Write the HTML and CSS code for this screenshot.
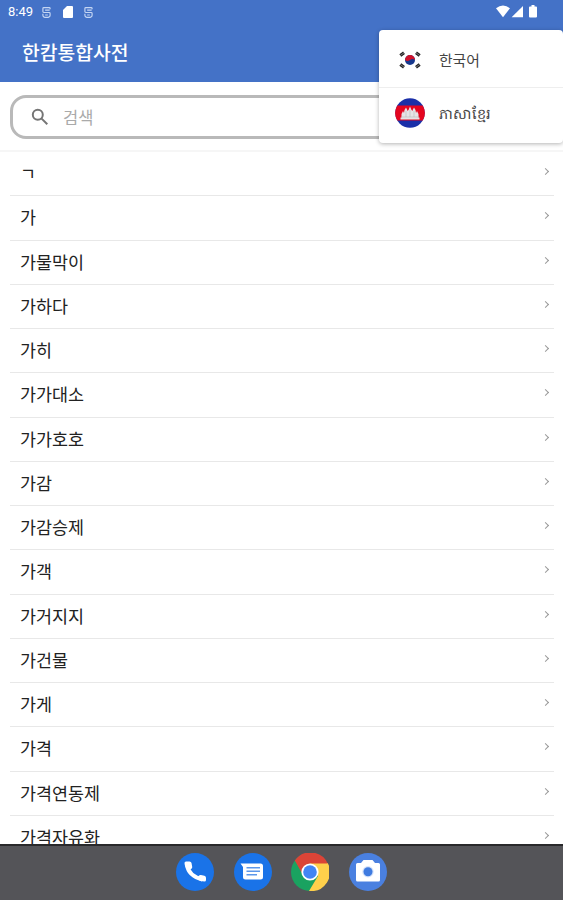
FILE: index.html
```
<!DOCTYPE html>
<html lang="ko">
<head>
    <meta charset="UTF-8">
    <title>한캄통합사전</title>
    <link rel="stylesheet" href="styles.css">
</head>
<body>

<header class="header">
    <div class="status-bar">
        <span class="time">8:49</span>
        <svg class="notice" viewBox="0 0 10 14"><path d="M9 3.500V2.500q0-1-1-1H2q-1 0-1 1V6q0 1 1 1h6q1 0 1 1v2q0 2.500-4 2.500T1 10V8.500M3.500 4.300h5M3.500 9.800h3"/></svg>
        <svg class="sd-card" viewBox="0 0 10 12"><path d="M4 0h5q1 0 1 1v10q0 1-1 1H1q-1 0-1-1V4z"/></svg>
        <svg class="notice" viewBox="0 0 10 14"><path d="M9 3.500V2.500q0-1-1-1H2q-1 0-1 1V6q0 1 1 1h6q1 0 1 1v2q0 2.500-4 2.500T1 10V8.500M3.500 4.300h5M3.500 9.800h3"/></svg>
        <svg class="signals" viewBox="0 0 42 14">
            <path d="M0 3.300q7-5.800 14 0L7 12.200z"/>
            <path d="M27 1v11.200H15.600z"/>
            <path d="M35.500 0h3v1.400H40q1 0 1 1v9q0 1-1 1h-6q-1 0-1-1v-9q0-1 1-1h1.500z"/>
        </svg>
    </div>
    <h1 class="title">한캄통합사전</h1>
</header>

<div class="search">
    <label class="search-box">
        <svg class="search-icon" viewBox="0 0 18 18"><circle cx="6.8" cy="6.8" r="5"/><path d="M10.6 10.6l5.700 5.700"/></svg>
        <input type="text" placeholder="검색">
    </label>
</div>

<ul class="words">
    <li>ㄱ<span class="arrow"></span></li>
    <li>가<span class="arrow"></span></li>
    <li>가물막이<span class="arrow"></span></li>
    <li>가하다<span class="arrow"></span></li>
    <li>가히<span class="arrow"></span></li>
    <li>가가대소<span class="arrow"></span></li>
    <li>가가호호<span class="arrow"></span></li>
    <li>가감<span class="arrow"></span></li>
    <li>가감승제<span class="arrow"></span></li>
    <li>가객<span class="arrow"></span></li>
    <li>가거지지<span class="arrow"></span></li>
    <li>가건물<span class="arrow"></span></li>
    <li>가게<span class="arrow"></span></li>
    <li>가격<span class="arrow"></span></li>
    <li>가격연동제<span class="arrow"></span></li>
    <li>가격자유화<span class="arrow"></span></li>
</ul>

<nav class="dock">
    <svg viewBox="0 0 38 38">
        <circle cx="19" cy="19" r="19" fill="#1a73e8"/>
        <path fill="none" stroke="#fff" stroke-width="4" d="M11 12q1.500 11 15.500 14.500"/>
        <path fill="#fff" d="M10 8.500h3.500q1.700 0 2 1.600l.7 3.600q.2 1.300-.8 2L12.500 18Q8.500 14 8.500 10q0-1.500 1.500-1.500zM20.500 25.500l2.300-2.700q.9-1 2.100-.7l3.500.7q1.600.3 1.600 2V27q0 1.600-1.600 1.600-4.400 0-7.900-3.100z"/>
    </svg>
    <svg viewBox="0 0 38 38">
        <circle cx="19" cy="19" r="19" fill="#1a73e8"/>
        <path fill="#fff" d="M6.500 10.500H26.500q2.500 0 2.500 2.500v11q0 2.500-2.500 2.500h-15q-2.500 0-2.500-2.500V14z"/>
        <path stroke="#5c97ea" stroke-width="1.600" d="M12.500 14.800h13.500M12.500 18.300h13.500M12.500 21.800h10.500"/>
    </svg>
    <svg viewBox="0 0 38 38">
        <circle cx="19" cy="19" r="19" fill="#1aa260"/>
        <path fill="#ffd04b" d="M19 10h17.700A19 19 0 0 1 18 38l9-15z"/>
        <path fill="#db4437" d="M3.800 7.600A19 19 0 0 1 36.700 10.500H19L10.800 20z"/>
        <circle cx="19" cy="19" r="8.600" fill="#fff"/>
        <circle cx="19" cy="19" r="6.800" fill="#4285f4"/>
    </svg>
    <svg viewBox="0 0 38 38">
        <circle cx="19" cy="19" r="19" fill="#4a80e0"/>
        <path fill="#fff" d="M14.500 7h9l2.500 3h3.500q1.500 0 1.500 1.500V27q0 1.500-1.500 1.500h-21Q7 28.500 7 27V11.500Q7 10 8.500 10H12z"/>
        <circle cx="19" cy="18.700" r="5.700" fill="#d5e3fb"/>
        <circle cx="19" cy="18.700" r="4.500" fill="#3f7be0"/>
    </svg>
</nav>

<div class="menu">
    <div class="menu-item">
        <svg class="flag" viewBox="0 0 30 30">
            <circle cx="15" cy="15" r="5" fill="#16388e"/>
            <path fill="#d0122b" d="M10 15a5 5 0 0 1 10 0q-2.500-2-5 0-2.500 2-5 0z"/>
            <path stroke="#222" stroke-width="3.200" d="M5.300 10.500l3.700-2.700M21 7.800l3.700 2.700M5.300 19.500L9 22.200M21 22.200l3.700-2.700"/>
            <path stroke="#fff" stroke-width=".4" d="M5.300 10.500l3.700-2.700M21 7.800l3.700 2.700M5.300 19.500L9 22.200M21 22.200l3.700-2.700"/>
        </svg>
        <span>한국어</span>
    </div>
    <div class="menu-item">
        <svg class="flag" viewBox="0 0 30 30">
            <circle cx="15" cy="15" r="14.700" fill="#1a2fa8"/>
            <path fill="#e4051f" d="M2.300 7.500h25.400a14.700 14.700 0 0 1 0 15H2.300a14.700 14.700 0 0 1 0-15z"/>
            <path fill="#e6e3e6" d="M5.500 21.500v-2h1V16L8 13l1 2 .5-3L11 9.500l1.300 2.500v1l1.200-1L15 8.500l1.500 3.500 1.200 1v-1L19 9.500l1.500 2.500.5 3 1-2 1.500 3v3.500h1v2z"/>
            <path stroke="#bbb" stroke-width=".6" d="M6 19h18M11 13v6M15 12v7M19 13v6"/>
        </svg>
        <span class="khmer" lang="km">ភាសាខ្មែរ</span>
    </div>
</div>

</body>
</html>
```
FILE: styles.css
```
* {
    box-sizing: border-box;
}
body {
    margin: 0;
    height: 100vh;
    display: flex;
    flex-direction: column;
    overflow: hidden;
    background: #fff;
    color: #222;
    font-family: "Noto Sans CJK KR", sans-serif;
}
.header {
    flex: none;
    height: 82px;
    background: #4472c7;
    color: #fff;
}
.status-bar {
    display: flex;
    align-items: center;
    height: 24px;
    padding: 0 25px 0 8px;
}
.time {
    width: 34px;
    font: 400 13px/24px Roboto, sans-serif;
}
.notice {
    width: 9px;
    height: 13px;
    fill: none;
    stroke: #c5d6f3;
    stroke-width: 1.3;
}
.sd-card {
    width: 10px;
    height: 12px;
    margin: 0 11px 0 12px;
    fill: #fff;
}
.signals {
    width: 42px;
    height: 14px;
    margin-left: auto;
    fill: #fff;
}
.title {
    margin: 0;
    padding-left: 22px;
    font-size: 19.3px;
    font-weight: 500;
    line-height: 57px;
}
.search {
    flex: none;
    height: 70px;
    padding: 13px 10px 0;
    border-bottom: 2px solid #f6f6f6;
}
.search-box {
    display: flex;
    align-items: center;
    height: 44px;
    padding-left: 18px;
    border: 3px solid #b9b9b9;
    border-radius: 16px;
}
.search-icon {
    width: 18px;
    height: 18px;
    fill: none;
    stroke: #757575;
    stroke-width: 2;
}
input {
    flex: 1;
    min-width: 0;
    margin-left: 14px;
    padding: 0;
    border: none;
    outline: none;
    background: none;
    font: 16.5px "Noto Sans CJK KR", sans-serif;
}
input::placeholder {
    color: #aaa;
}
.words {
    flex: 1;
    min-height: 0;
    margin: 0;
    padding: 0 9px 0 10px;
    overflow: hidden;
    list-style: none;
}
.words li {
    display: flex;
    justify-content: space-between;
    height: 44.25px;
    padding: 0 6px 0 10px;
    border-bottom: 1px solid #e8e8e8;
    font-size: 17.4px;
    line-height: 42px;
}
.arrow {
    width: 5px;
    height: 5px;
    margin-top: 17px;
    border-top: 1.5px solid #999;
    border-right: 1.5px solid #999;
    transform: rotate(45deg);
}
.dock {
    flex: none;
    display: flex;
    justify-content: center;
    gap: 19.5px;
    height: 56px;
    padding-top: 7px;
    border-top: 2px solid #29292b;
    background: #545458;
}
.dock svg {
    width: 38px;
    height: 38px;
}
.menu {
    position: absolute;
    top: 30px;
    right: 0;
    width: 184px;
    height: 113px;
    border-radius: 4px;
    background: #fff;
    box-shadow: 0 1px 4px rgba(0, 0, 0, 0.3);
}
.menu-item {
    display: flex;
    align-items: center;
    height: 57px;
    padding: 3px 0 0 16px;
    color: #444;
    font-size: 14.8px;
    line-height: 20px;
}
.menu-item + .menu-item {
    height: 56px;
    padding: 0 0 5px 16px;
    border-top: 1px solid #eee;
}
.flag {
    width: 30px;
    height: 30px;
    margin-right: 14px;
}
.khmer {
    font-size: 14.5px;
}
```
